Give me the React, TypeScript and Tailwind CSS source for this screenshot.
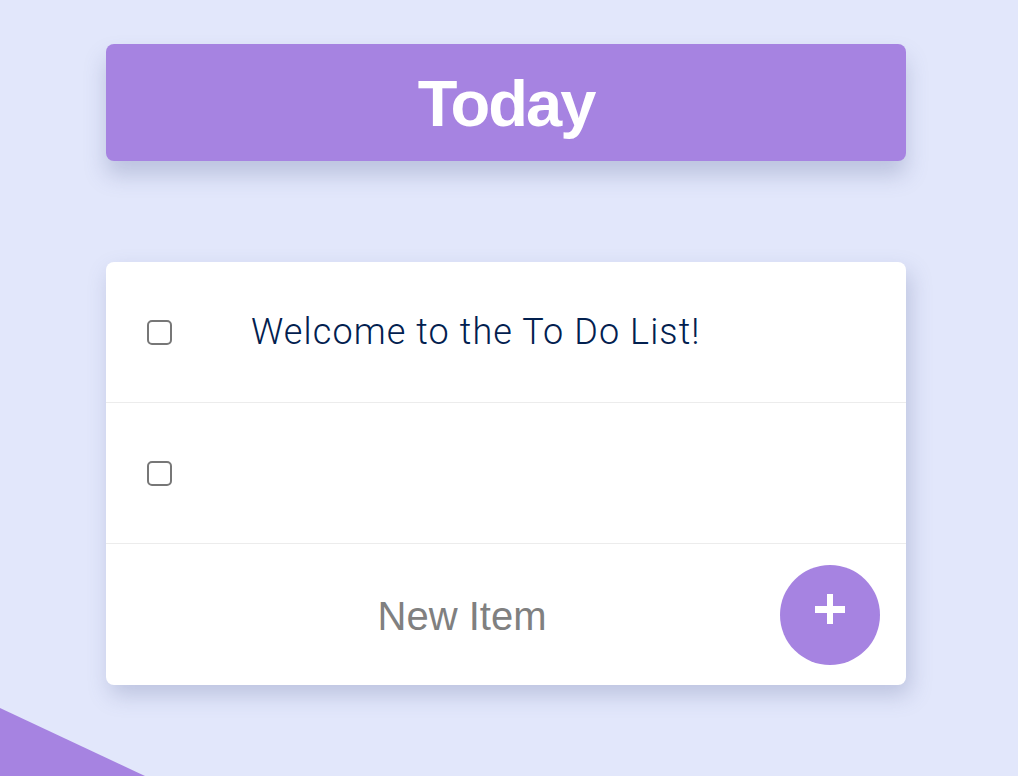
import React from "react";

export default function App() {
  return (
    <div className="relative h-[776px] w-full overflow-hidden bg-[#e2e7fb] font-['Liberation_Sans',Arial,sans-serif]">
      <div className="flex flex-col pl-[106px] pt-[44px]">
        <div className="flex h-[117px] w-[800px] items-center justify-center rounded-[8px] bg-[#a683e1] shadow-[0_14px_22px_rgba(90,100,150,0.28)]">
          <h1 className="mt-[2px] text-[65px] font-bold leading-none tracking-[-2px] text-white">Today</h1>
        </div>

        <div className="mt-[101px] flex w-[800px] flex-col rounded-[8px] bg-white shadow-[4px_10px_22px_rgba(90,100,150,0.28)]">
          <div className="flex h-[141px] items-center border-b border-[#ececec]">
            <div className="ml-[41px] h-[25px] w-[25px] rounded-[5px] border-2 border-[#777777] bg-white" />
            <p className="ml-[79px] font-['Roboto',sans-serif] text-[36px] font-light leading-none tracking-[1.1px] text-[#02204f]">
              Welcome to the To Do List!
            </p>
          </div>
          <div className="flex h-[141px] items-center border-b border-[#ececec]">
            <div className="ml-[41px] h-[25px] w-[25px] rounded-[5px] border-2 border-[#777777] bg-white" />
          </div>
          <div className="flex h-[141px] items-center">
            <div className="flex flex-1 justify-center pl-[38px]">
              <span className="mt-[2px] text-[40px] leading-none text-[#808080]">New Item</span>
            </div>
            <div className="mr-[26px] flex h-[100px] w-[100px] items-center justify-center rounded-full bg-[#a683e1]">
              <svg width="30" height="30" viewBox="0 0 30 30" className="-mt-[11px]">
                <rect x="12" y="0" width="6" height="30" fill="white" />
                <rect x="0" y="12" width="30" height="7" fill="white" />
              </svg>
            </div>
          </div>
        </div>
      </div>
      <div className="absolute bottom-0 left-0 h-[68px] w-[145px] bg-[#a683e1] [clip-path:polygon(0_0,100%_100%,0_100%)]" />
    </div>
  );
}
